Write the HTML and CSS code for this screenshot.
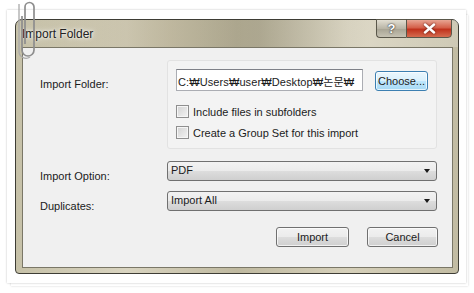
FILE: index.html
```html
<!DOCTYPE html>
<html lang="en">
<head>
  <meta charset="UTF-8">
  <title>Import Folder</title>
  <link rel="stylesheet" href="styles.css">
</head>
<body>
  <div class="sheet">
    <div class="paper">
      <div class="dialog">
        <div class="titlebar">
          <span class="title">Import Folder</span>
          <div class="caption-buttons">
            <span class="cap help">?</span>
            <span class="cap close">
              <svg width="13" height="11" viewBox="0 0 13 11"><path d="M2 1.5 L11 9.5 M11 1.5 L2 9.5" stroke="#fff" stroke-width="2.4" stroke-linecap="round"/></svg>
            </span>
          </div>
        </div>

        <div class="client">
          <div class="row folder-row">
            <label class="field-label">Import Folder:</label>
            <div class="panel">
              <div class="path-line">
                <div class="textbox">C:₩Users₩user₩Desktop₩논문₩</div>
                <button class="btn btn-focus">Choose...</button>
              </div>
              <div class="check"><span class="box"></span>Include files in subfolders</div>
              <div class="check"><span class="box"></span>Create a Group Set for this import</div>
            </div>
          </div>

          <div class="row select-row">
            <label class="field-label">Import Option:</label>
            <div class="combo">PDF<span class="arrow"></span></div>
          </div>

          <div class="row select-row second">
            <label class="field-label">Duplicates:</label>
            <div class="combo">Import All<span class="arrow"></span></div>
          </div>

          <div class="actions">
            <button class="btn btn-wide">Import</button>
            <button class="btn btn-wide">Cancel</button>
          </div>
        </div>
      </div>
    </div>

    <svg class="clip" width="20" height="60" viewBox="0 0 20 60">
      <path d="M6 16 V50 A6 6 0 0 0 18 50 V7 A4.5 4.5 0 0 0 9 7 V44" fill="none" stroke="#8e8e8e" stroke-width="1.7"/>
      <path d="M3 4 V52 A7 7 0 0 0 14 57" fill="none" stroke="#aaaaaa" stroke-width="1.3"/>
    </svg>
  </div>
</body>
</html>
```

FILE: styles.css
```css
body {
  margin: 0;
  background: #fff;
  font-family: 'Liberation Sans', 'Noto Sans CJK KR', sans-serif;
  font-size: 11px;
  color: #1b1b1b;
}

.sheet {
  position: relative;
  width: 474px;
  height: 293px;
  padding: 10px 0 0 7px;
  box-sizing: border-box;
}

.paper {
  width: 459px;
  height: 273px;
  background: #fff;
  box-shadow: 0 0 2px rgba(0,0,0,0.25), 3px 4px 0 -1px #fff, 3px 4px 2px -1px rgba(0,0,0,0.18);
  padding: 9px 7px 9px 8px;
  box-sizing: border-box;
}

.dialog {
  height: 255px;
  border: 1px solid #3e3d35;
  border-radius: 7px 7px 4px 4px;
  background: linear-gradient(90deg, #c6c1a8 0%, #d9d4c0 25%, #bfb9a0 50%, #d6d0ba 75%, #c2bca3 100%);
  padding: 0 5px 5px 6px;
  box-sizing: border-box;
  display: flex;
  flex-direction: column;
}

.titlebar {
  height: 27px;
  display: flex;
  justify-content: space-between;
  align-items: flex-start;
  background: linear-gradient(90deg, rgba(255,255,255,0) 0%, rgba(160,150,120,0.35) 35%, rgba(120,115,95,0.3) 55%, rgba(255,255,255,0.2) 80%);
  margin: 0 -5px 0 -6px;
  padding: 0 6px 0 6px;
}

.title {
  margin-top: 7px;
  font-size: 12px;
  color: #222;
  text-shadow: 0 0 6px #fff, 0 0 3px #fff;
}

.caption-buttons {
  display: flex;
  margin-top: -1px;
}

.cap {
  height: 19px;
  display: flex;
  align-items: center;
  justify-content: center;
  border: 1px solid #5a574a;
  box-sizing: border-box;
}

.help {
  width: 30px;
  border-radius: 0 0 0 4px;
  border-right: none;
  background: linear-gradient(#e2ded2, #b9b5a6 50%, #a7a393 51%, #c6c2b3);
  color: #fff;
  font-weight: bold;
  font-size: 13px;
  text-shadow: 0 0 2px #333, 0 0 1px #333;
}

.close {
  width: 46px;
  border-radius: 0 0 4px 0;
  background: linear-gradient(#e8a593, #d4604a 45%, #c0321d 55%, #d56c50);
}

.close svg {
  filter: drop-shadow(0 0 1px #5a1a10);
}

.client {
  flex: 1;
  background: #f0f0f0;
  border: 1px solid #7a7767;
  padding: 12px 15px 0 17px;
}

.row {
  display: flex;
}

.field-label {
  width: 127px;
  flex-shrink: 0;
}

.folder-row .field-label {
  padding-top: 18px;
}

.panel {
  width: 270px;
  height: 89px;
  box-sizing: border-box;
  border: 1px solid #e2e2e2;
  border-radius: 3px;
  background: #f3f3f3;
  padding: 8px 0 0 8px;
}

.path-line {
  display: flex;
  align-items: flex-end;
  margin-bottom: 14px;
}

.textbox {
  width: 187px;
  height: 22px;
  box-sizing: border-box;
  border: 1px solid #abadb3;
  border-top-color: #7f8188;
  background: #fff;
  padding: 3px 0 0 1px;
  font-size: 11px;
  letter-spacing: 0.1px;
  white-space: nowrap;
  overflow: hidden;
}

.btn {
  font-family: inherit;
  font-size: 11px;
  color: #1b1b1b;
  height: 20px;
  padding: 0;
  border: 1px solid #707070;
  border-radius: 3px;
  background: linear-gradient(#f2f2f2 0%, #ebebeb 50%, #dddddd 51%, #cfcfcf 100%);
  box-shadow: inset 0 0 0 1px rgba(255,255,255,0.7);
}

.btn-focus {
  width: 53px;
  margin-left: 12px;
  border-color: #3c7fb1;
  background: linear-gradient(#eaf6fd 0%, #d9f0fc 50%, #bee6fd 51%, #a7d9f5 100%);
}

.check {
  display: flex;
  align-items: center;
  height: 13px;
  margin-bottom: 8px;
}

.box {
  width: 11px;
  height: 11px;
  border: 1px solid #8f8f8f;
  background: linear-gradient(135deg, #d2d2d2, #f4f4f4);
  box-shadow: inset 0 0 0 1px #f6f6f6;
  margin-right: 4px;
}

.select-row {
  margin-top: 12px;
  align-items: flex-start;
}

.select-row .field-label {
  padding-top: 9px;
}

.select-row.second {
  margin-top: 9px;
}

.combo {
  position: relative;
  width: 270px;
  height: 20px;
  box-sizing: border-box;
  border: 1px solid #707070;
  border-radius: 3px;
  background: linear-gradient(#f2f2f2 0%, #ebebeb 50%, #dddddd 51%, #cfcfcf 100%);
  padding: 2px 0 0 3px;
}

.arrow {
  position: absolute;
  right: 6px;
  top: 7px;
  border-left: 3.5px solid transparent;
  border-right: 3.5px solid transparent;
  border-top: 4px solid #1b1b1b;
}

.actions {
  display: flex;
  justify-content: flex-end;
  gap: 18px;
  margin-top: 15px;
  margin-right: -1px;
}

.btn-wide {
  width: 73px;
}

.actions .btn-wide:last-child {
  width: 71px;
}

.clip {
  position: absolute;
  left: 16px;
  top: 0;
}
```
